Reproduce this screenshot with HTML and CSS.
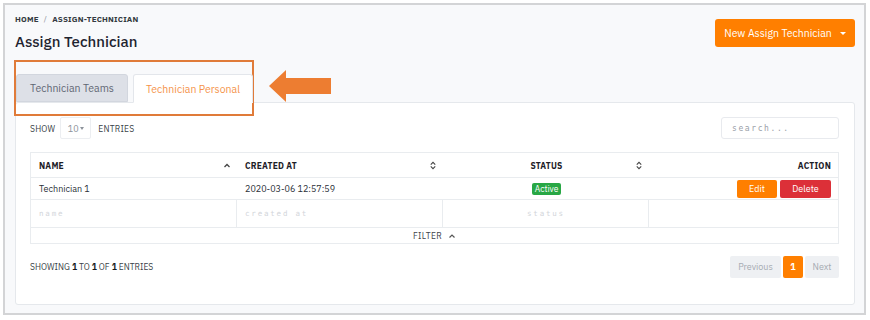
FILE: index.html
```html
<!DOCTYPE html>
<html>
<head>
<meta charset="utf-8">
<link rel="stylesheet" href="styles.css">
</head>
<body>
<div class="frame">
  <div class="page-head">
    <div class="titles">
      <div class="crumbs">HOME <span class="sep">/</span> ASSIGN-TECHNICIAN</div>
      <h1 class="title">Assign Technician</h1>
    </div>
    <button class="btn-new">New Assign Technician <span class="caret"></span></button>
  </div>

  <div class="tabs">
    <div class="tab tab-muted">Technician Teams</div>
    <div class="tab tab-active">Technician Personal</div>
  </div>

  <div class="card">
    <div class="toolbar">
      <div class="show">
        <span>SHOW</span>
        <span class="select">10<span class="mini-caret"></span></span>
        <span>ENTRIES</span>
      </div>
      <div class="search">search...</div>
    </div>

    <div class="table">
      <div class="row head">
        <div class="cell">NAME <svg class="sort" viewBox="0 0 8 8"><path d="M1.5 5.5 L4 3 L6.5 5.5" fill="none" stroke="#444" stroke-width="1.3"/></svg></div>
        <div class="cell">CREATED AT <svg class="sort" viewBox="0 0 8 10"><path d="M1.5 4 L4 1.5 L6.5 4 M1.5 6 L4 8.5 L6.5 6" fill="none" stroke="#444" stroke-width="1.2"/></svg></div>
        <div class="cell center">STATUS <svg class="sort" viewBox="0 0 8 10"><path d="M1.5 4 L4 1.5 L6.5 4 M1.5 6 L4 8.5 L6.5 6" fill="none" stroke="#444" stroke-width="1.2"/></svg></div>
        <div class="cell right">ACTION</div>
      </div>
      <div class="row data">
        <div class="cell">Technician 1</div>
        <div class="cell">2020-03-06 12:57:59</div>
        <div class="cell center"><span class="badge">Active</span></div>
        <div class="cell right actions"><button class="btn-edit">Edit</button><button class="btn-del">Delete</button></div>
      </div>
      <div class="row filters">
        <div class="cell ph">name</div>
        <div class="cell ph">created at</div>
        <div class="cell ph center">status</div>
        <div class="cell"></div>
      </div>
      <div class="filter-foot">FILTER <svg class="chev" viewBox="0 0 8 8"><path d="M1.5 5.5 L4 3 L6.5 5.5" fill="none" stroke="#555" stroke-width="1.2"/></svg></div>
    </div>

    <div class="bottom">
      <div class="info">SHOWING <b>1</b> TO <b>1</b> OF <b>1</b> ENTRIES</div>
      <div class="pager">
        <span class="pg">Previous</span>
        <span class="pg cur">1</span>
        <span class="pg">Next</span>
      </div>
    </div>
  </div>

  <div class="highlight"></div>
  <svg class="arrow" viewBox="0 0 64 36" width="64" height="36">
    <path d="M1 17 L18 1 L18 9 L63 9 L63 25 L18 25 L18 33 Z" fill="#ed7d31"/>
  </svg>
</div>
</body>
</html>
```

FILE: styles.css
```css
* { box-sizing: border-box; }
html, body { margin: 0; padding: 0; background: #ffffff; }
body {
  font-family: "IBM Plex Sans", "Noto Sans", "Open Sans", sans-serif;
  color: #212529;
  width: 870px;
  height: 320px;
  overflow: hidden;
}
.frame {
  position: relative;
  margin: 3px 0 0 3px;
  width: 863px;
  height: 312px;
  border: 2px solid #d3d4d6;
  background: #f8f9fb;
  padding: 8px 9px 0 10px;
}
.page-head {
  display: flex;
  justify-content: space-between;
  align-items: flex-start;
}
.crumbs {
  font-size: 8px;
  font-weight: 700;
  line-height: 12px;
  letter-spacing: 0.2px;
  color: #343a40;
}
.crumbs .sep { color: #8a8f96; font-weight: 400; margin: 0 3px; }
.title {
  margin: 7px 0 0;
  font-size: 15px;
  font-weight: 500;
  line-height: 20px;
  color: #1e2430;
}
.btn-new {
  margin-top: 6px;
  height: 28px;
  width: 140px;
  border: 0;
  border-radius: 3px;
  background: #ff7f00;
  color: #fff;
  font-family: inherit;
  font-size: 10.5px;
  padding: 0;
  display: flex;
  align-items: center;
  justify-content: center;
  gap: 6px;
}
.caret {
  width: 0; height: 0;
  border-left: 3px solid transparent;
  border-right: 3px solid transparent;
  border-top: 3px solid #fff;
  margin-left: 2px;
}
.tabs {
  display: flex;
  gap: 5px;
  margin-top: 22px;
  padding-left: 1px;
  height: 28px;
  position: relative;
  z-index: 1;
}
.tab {
  height: 29px;
  display: flex;
  align-items: center;
  justify-content: center;
  font-size: 10.5px;
  border-radius: 3px 3px 0 0;
}
.tab-muted {
  width: 112px;
  background: #dde0e7;
  color: #5f6673;
  border: 1px solid #d2d6de;
  height: 28px;
}
.tab-active {
  width: 120px;
  background: #ffffff;
  color: #f5934a;
  border: 1px solid #e3e6eb;
  border-bottom: 1px solid #fff;
}
.card {
  background: #fff;
  border: 1px solid #e5e8ec;
  border-radius: 3px;
  height: 203px;
  padding: 14px 15px 0 14px;
}
.toolbar {
  display: flex;
  justify-content: space-between;
  align-items: center;
  height: 22px;
}
.show {
  display: flex;
  align-items: center;
  font-size: 8.5px;
  color: #3a3f47;
  letter-spacing: 0.2px;
}
.select {
  margin: 0 7px 0 5px;
  width: 31px;
  height: 22px;
  border: 1px solid #eceef1;
  border-radius: 2px;
  display: flex;
  align-items: center;
  justify-content: center;
  color: #8d939b;
  font-size: 9px;
  gap: 1px;
}
.mini-caret {
  width: 0; height: 0;
  border-left: 2.5px solid transparent;
  border-right: 2.5px solid transparent;
  border-top: 3px solid #8d939b;
}
.search {
  width: 118px;
  height: 22px;
  border: 1px solid #e8eaee;
  border-radius: 3px;
  font-family: "DejaVu Sans Mono", monospace;
  font-size: 8px;
  letter-spacing: 1.6px;
  color: #9aa0a8;
  padding-left: 10px;
  display: flex;
  align-items: center;
}
.table {
  margin-top: 13px;
  border: 1px solid #e9ecef;
}
.row {
  display: grid;
  grid-template-columns: 206px 206px 206px 1fr;
}
.cell {
  display: flex;
  align-items: center;
  padding: 0 7px 0 8px;
  font-size: 9px;
  color: #2b3038;
  position: relative;
}
.cell.center { justify-content: center; }
.cell.right { justify-content: flex-end; }
.head { height: 25px; border-bottom: 1px solid #e9ecef; }
.head .cell { font-weight: 700; font-size: 8.5px; color: #1c2027; letter-spacing: 0.2px; }
.head .sort { position: absolute; right: 6px; top: 8px; width: 8px; height: 9px; }
.data { height: 22px; border-bottom: 1px solid #e9ecef; }
.badge {
  background: #28a745;
  color: #fff;
  font-size: 8.5px;
  border-radius: 2px;
  height: 12px;
  line-height: 12px;
  width: 29px;
  text-align: center;
}
.actions { gap: 3px; }
.btn-edit, .btn-del {
  border: 0;
  border-radius: 2px;
  color: #fff;
  font-family: inherit;
  font-size: 9px;
  height: 18px;
  padding: 0;
}
.btn-edit { background: #ff7f00; width: 40px; }
.btn-del { background: #dc3038; width: 51px; }
.filters { height: 28px; border-bottom: 1px solid #e9ecef; }
.filters .cell { border-right: 1px solid #e9ecef; }
.filters .cell:last-child { border-right: 0; }
.ph {
  font-family: "DejaVu Sans Mono", monospace;
  font-size: 7.5px;
  letter-spacing: 1.8px;
  color: #d2d5da;
}
.filter-foot {
  height: 15px;
  display: flex;
  align-items: center;
  justify-content: center;
  gap: 6px;
  font-size: 8.5px;
  color: #3d424a;
  letter-spacing: 0.3px;
}
.chev { width: 8px; height: 8px; }
.bottom {
  margin-top: 11px;
  display: flex;
  justify-content: space-between;
  align-items: center;
  height: 23px;
}
.info { font-size: 8.5px; color: #3a3f47; }
.info b { color: #15181d; }
.pager { display: flex; gap: 2px; }
.pg {
  height: 22px;
  display: flex;
  align-items: center;
  justify-content: center;
  background: #eef0f3;
  color: #a6abb2;
  font-size: 9px;
  padding: 0 8px;
  border-radius: 2px;
}
.pg:first-child { width: 51px; }
.pg:last-child { width: 34px; }
.pg.cur { background: #ff7f00; color: #fff; width: 20px; padding: 0; font-weight: 700; }
.highlight {
  position: absolute;
  left: 9px;
  top: 55px;
  width: 240px;
  height: 56px;
  border: 2px solid #e07b39;
}
.arrow {
  position: absolute;
  left: 263px;
  top: 64px;
}
```
